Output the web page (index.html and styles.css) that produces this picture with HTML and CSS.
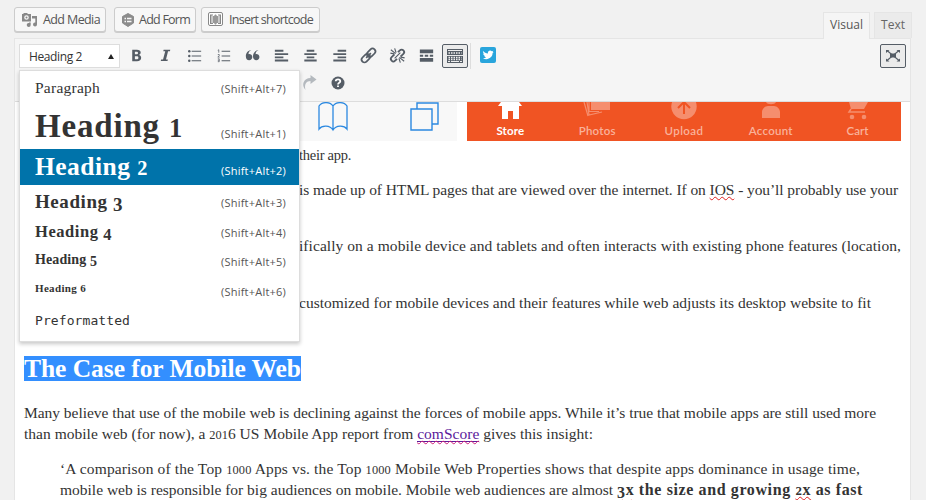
FILE: index.html
```
<!DOCTYPE html>
<html lang="en">
<head>
<meta charset="utf-8">
<title>Post editor</title>
<link rel="stylesheet" href="styles.css">
</head>
<body>
<div class="editor">
  <header class="top">
    <div class="media">
      <button class="btn b1"><svg width="16" height="16" viewBox="0 0 16 16"><path fill="#888" fill-rule="evenodd" d="M0 2h1.500V1h4v1H9v7.500H0zM4.500 3.200a2.300 2.300 0 1 0 0 4.600 2.300 2.300 0 0 0 0-4.600zM4.500 4.500a1 1 0 1 1 0 2 1 1 0 0 1 0-2z"/><path fill="#888" d="M10 4h5v8.500a2 2 0 1 1-1.700-2V6.500H10zM8.700 10.500V13a2 2 0 1 1-1.700-2v-.5z"/></svg><span class="fit" data-w="57">Add Media</span></button>
      <button class="btn b2"><svg width="14" height="16" viewBox="0 0 14 16"><path fill="#8c8c8c" stroke="#8c8c8c" stroke-linejoin="round" d="M7 1.500l5.500 3v6.500L7 14.500l-5.500-3.500V4.500z"/><path stroke="#f7f7f7" stroke-width="1.300" d="M3.500 6.500h1.500M6 6.500h4.500M3.500 9.500h1.500M6 9.500h4.500"/></svg><span class="fit" data-w="51">Add Form</span></button>
      <button class="btn b3"><svg width="15" height="15" viewBox="0 0 15 15"><rect x=".5" y=".5" width="14" height="13" rx="1.500" fill="#fff" stroke="#888"/><path fill="#888" d="M2 2.500h3v1H3.500v7.500H5v1H2zM10 2.500h3V12h-3v-1h1.500V3.500H10z"/><path fill="#999" d="M4.500 4h1.500l1-1.500h1L9 4h1.500v7H9l-1 1.500H7L6 11H4.500z"/></svg><span class="fit" data-w="84">Insert shortcode</span></button>
    </div>
    <div class="tabs"><div class="tab on">Visual</div><div class="tab">Text</div></div>
  </header>
  <section class="frame">
    <div class="toolbar">
      <div class="row">
        <div class="select"><span class="fit" data-w="53">Heading 2</span><i></i></div>
        <div class="icons">
          <span class="ic"><svg viewBox="0 0 20 20"><path fill-rule="evenodd" d="M5.500 4H10.500c2.300 0 3.900 1 3.900 2.900 0 1.300-.7 2.200-1.800 2.600 1.400.3 2.300 1.300 2.300 2.800 0 2.300-1.600 3.700-4.400 3.700h-5zM8.300 6v2.700h1.500c1.200 0 1.800-.5 1.800-1.400S11 6 9.800 6zM8.300 10.700V14h1.800c1.300 0 1.900-.6 1.900-1.700s-.7-1.600-2-1.600z"/></svg></span>
          <span class="ic"><svg viewBox="0 0 20 20"><path d="M8 4h7l-.3 1.600h-2L10.500 14.100h2l-.4 1.700H5l.4-1.700h2L9.700 5.600h-2z"/></svg></span>
          <span class="ic"><svg viewBox="0 0 20 20"><circle cx="4.500" cy="5.500" r="1.300"/><circle cx="4.500" cy="10.500" r="1.300"/><circle cx="4.500" cy="15.500" r="1.300"/><path d="M7 5h10v1H7zM7 10h10v1H7zM7 15h10v1H7z"/></svg></span>
          <span class="ic"><svg viewBox="0 0 20 20"><path fill="none" stroke="#555d66" stroke-width=".8" d="M4 4.500l1-.5v3M4 9h1.500v1.200L4 11.700h2M4 13.500h1.500v3H4M4 15h1.500"/><path d="M8 5h9v1H8zM8 10h9v1H8zM8 15h9v1H8z"/></svg></span>
          <span class="ic"><svg viewBox="0 0 20 20"><path d="M8.800 4.300C6.500 5.500 5.700 7 5.800 8.600c2-.4 4 .9 4 3 0 1.900-1.400 3.400-3.300 3.400-2.200 0-3.500-1.700-3.500-4.200 0-3.500 2.200-6 5.800-6.500zM16.300 4.300C14 5.500 13.200 7 13.300 8.600c2-.4 4 .9 4 3 0 1.900-1.400 3.400-3.300 3.400-2.200 0-3.500-1.700-3.500-4.200 0-3.500 2.200-6 5.800-6.500z"/></svg></span>
          <span class="ic"><svg viewBox="0 0 20 20"><path d="M3 4h9v2H3zM3 7.500h14v2H3zM3 11h9v2H3zM3 14.300h14v2H3z"/></svg></span>
          <span class="ic"><svg viewBox="0 0 20 20"><path d="M6 4h8v2H6zM3.500 7.500h13v2h-13zM6 11h8v2H6zM3.500 14.300h13v2h-13z"/></svg></span>
          <span class="ic"><svg viewBox="0 0 20 20"><path d="M8 4h9v2H8zM3.500 7.500H17v2H3.500zM8 11h9v2H8zM3.500 14.300H17v2H3.500z"/></svg></span>
          <span class="ic"><svg viewBox="0 0 20 20"><g fill="none" stroke="#555d66" stroke-width="1.800" transform="rotate(-45 10 10)"><rect x="1" y="7" width="10" height="6" rx="3"/><rect x="9" y="7" width="10" height="6" rx="3"/><path d="M6.500 10h7"/></g></svg></span>
          <span class="ic"><svg viewBox="0 0 20 20"><g fill="none" stroke="#555d66" stroke-width="1.900"><path d="M10.500 6.500l2-2a2.600 2.600 0 0 1 3.700 3.700l-3 3M9.500 13.500l-2 2a2.600 2.600 0 0 1-3.700-3.700l3-3"/><path stroke-width="1.200" d="M3 4l5 4M7 2.500L8.500 7M2.500 7.500l4 .8M17 16l-5-4M13 17.500L11.500 13M17.500 12.500l-4-.8M7 13l6-6"/></g></svg></span>
          <span class="ic"><svg viewBox="0 0 20 20"><path d="M3 3.700h14v4H3zM3 9.200h3.500v2H3zM8.200 9.200h3.600v2H8.200zM13.500 9.200H17v2h-3.500zM3 12.700h14v4H3z"/></svg></span>
          <span class="ic active"><svg viewBox="0 0 20 20"><path d="M2 3h16v6H2zM2 10h16v7H2z"/><path fill="none" stroke="#eee" d="M3 4.500h14M3 15.500h2M6 15.500h8M15 15.500h2"/><path fill="none" stroke="#eee" stroke-width="1.300" stroke-dasharray="1.500 1" d="M3.500 7h13M3.500 11.500h13M3.500 13.500h13"/></svg></span>
        </div>
        <div class="sep"></div>
        <svg class="tw" width="16" height="16" viewBox="0 0 16 16"><rect width="16" height="16" rx="2" fill="#29a5dc"/><path fill="#fff" d="M3 4c1.300 1.500 3 2.300 4.900 2.400C7.500 4 10.300 2.700 11.800 4.300l1.600-.6-.9 1.400 1.200-.2-1.100 1.200c.1 4.700-5.300 7.700-9.700 5.100 1.300.1 2.400-.3 3.200-.9-1-.1-1.600-.7-1.900-1.500h.9C3.900 8.300 3.200 7.500 3.200 6.400l1 .2C3 5.700 2.800 5 3 4z"/></svg>
        <span class="full"><svg width="18" height="18" viewBox="0 0 18 18"><path fill="#555d66" d="M6 6.500h6v4H6zM2 3h3.500L2 6zM16 3v3l-3.500-3zM2 14.500v-3l3.500 3zM16 14.500h-3.500l3.500-3z"/><path stroke="#555d66" stroke-width="1.100" d="M3 3.500l12 10M15 3.500l-12 10"/></svg></span>
      </div>
      <div class="row second">
        <svg width="18" height="18" viewBox="0 0 18 18"><path fill="#b4b9be" d="M10.500 1l6 4.500-6 4.500V7C6.500 7 4 10 5.500 16 1 11 3.500 4 10.500 4z"/></svg>
        <svg width="16" height="16" viewBox="0 0 16 16"><circle cx="8" cy="8" r="6.500" fill="#555d66"/><path fill="none" stroke="#fff" stroke-width="1.800" d="M5.700 6.300C5.700 3.600 10.300 3.600 10.300 6.300 10.300 7.800 8 7.700 8 9.400M8 10.400v1.700"/></svg>
      </div>
    </div>
    <main class="content">
      <div class="shots">
        <div class="safari">
          <svg width="30" height="30" viewBox="0 0 30 30" fill="none" stroke="#2b88e0" stroke-width="1.300"><path d="M15 4C12-.5 4-.5 1 4v23c3-4 11-4 14 1 3-5 11-5 14-1V4C26-.5 18-.5 15 4zv24"/></svg>
          <svg width="30" height="30" viewBox="0 0 30 30" fill="none" stroke="#2b88e0" stroke-width="1.400"><path d="M1 7h21v21H1zM7 7V1h21v21h-6"/></svg>
        </div>
        <div class="appbar">
          <div class="app sel"><svg width="26" height="18" viewBox="0 0 26 18"><path fill="#fff" d="M4 0h18l3 4h-3v13h-6V9h-5v8H5V4H1z"/></svg><span class="fit" data-w="28">Store</span></div>
          <div class="app"><svg width="28" height="18" viewBox="0 0 28 18"><path fill="#f58e6e" d="M8 0h19v8H8z"/><path fill="none" stroke="#f58e6e" stroke-width="1.200" d="M6 0v9.500h10M4 0l2 13 13-3M1 0l4 14"/></svg><span class="fit" data-w="37">Photos</span></div>
          <div class="app"><svg width="26" height="18" viewBox="0 0 26 18"><circle cx="13" cy="4.500" r="12.700" fill="#f58e6e"/><path fill="none" stroke="#f05423" stroke-width="2" d="M13 12V1M7 6l6-6 6 6"/></svg><span class="fit" data-w="39">Upload</span></div>
          <div class="app"><svg width="18" height="18" viewBox="0 0 18 18"><path fill="#f58e6e" d="M4 0h10C13 3 5 3 4 0zM0 16v-6c0-3 3-6 6-6h6c3 0 6 3 6 6v6z"/></svg><span class="fit" data-w="44">Account</span></div>
          <div class="app"><svg width="22" height="18" viewBox="0 0 22 18"><path fill="#f58e6e" d="M2 0h19l-4 7H4z"/><path stroke="#f58e6e" stroke-width="1.500" fill="none" d="M4 7l-2 3h16"/><circle cx="5" cy="15" r="2.300" fill="#f58e6e"/><circle cx="17" cy="15" r="2.300" fill="#f58e6e"/></svg><span class="fit" data-w="22">Cart</span></div>
        </div>
      </div>
      <p class="part l1"><span class="fit" data-w="52">their app.</span></p>
      <p class="part l2"><span class="fit" data-w="599">is made up of HTML pages that are viewed over the internet. If on <u class="sp">IOS</u> - you’ll probably use your</span></p>
      <p class="part l3"><span class="fit" data-w="602">ifically on a mobile device and tablets and often interacts with existing phone features (location,</span></p>
      <p class="part l4"><span class="fit" data-w="572">customized for mobile devices and their features while web adjusts its desktop website to fit</span></p>
      <h2><span class="fit" data-w="277">The Case for Mobile Web</span></h2>
      <p><span class="fit" data-w="852">Many believe that use of the mobile web is declining against the forces of mobile apps. While it’s true that mobile apps are still used more</span><br>
      <span class="fit" data-w="569">than mobile web (for now), a <b class="os">201</b>6 US Mobile App report from <a class="sp">comScore</a> gives this insight:</span></p>
      <blockquote><span class="fit" data-w="800">‘A comparison of the Top <b class="os">1000</b> Apps vs. the Top <b class="os">1000</b> Mobile Web Properties shows that despite apps dominance in usage time,</span><br>
      <span class="fit" data-w="557">mobile web is responsible for big audiences on mobile. Mobile web audiences are almost </span><strong class="fit" data-w="246"><u class="sp"><b class="od">3</b>x</u> the size and growing <u class="sp"><b class="os">2</b>x</u> as fast</strong></blockquote>
    </main>
    <div class="menu">
      <div class="mi m0"><span class="fit" data-w="65">Paragraph</span><kbd class="fit" data-w="65">(Shift+Alt+7)</kbd></div>
      <div class="mi m1"><span class="fit" data-w="148">Heading <b class="os">1</b></span><kbd class="fit" data-w="65">(Shift+Alt+1)</kbd></div>
      <div class="mi m2"><span class="fit" data-w="113">Heading <b class="os">2</b></span><kbd class="fit" data-w="65">(Shift+Alt+2)</kbd></div>
      <div class="mi m3"><span class="fit" data-w="88">Heading <b class="od">3</b></span><kbd class="fit" data-w="65">(Shift+Alt+3)</kbd></div>
      <div class="mi m4"><span class="fit" data-w="77">Heading <b class="od">4</b></span><kbd class="fit" data-w="65">(Shift+Alt+4)</kbd></div>
      <div class="mi m5"><span class="fit" data-w="62">Heading <b class="od">5</b></span><kbd class="fit" data-w="65">(Shift+Alt+5)</kbd></div>
      <div class="mi m6"><span class="fit" data-w="51">Heading 6</span><kbd class="fit" data-w="65">(Shift+Alt+6)</kbd></div>
      <div class="mi m7"><span class="fit" data-w="95">Preformatted</span></div>
    </div>
  </section>
</div>
<script src="fit.js"></script>
</body>
</html>
```
FILE: styles.css
```
* { box-sizing: border-box; }
html, body { margin: 0; height: 500px; overflow: hidden; }
body { background: #f1f1f1; color: #333; font: 13px "Open Sans", sans-serif; }
svg { display: block; flex: none; }
.editor { padding: 0 14px; height: 500px; display: flex; flex-direction: column; }
.top { height: 38px; flex: none; display: flex; justify-content: space-between; }
.media { display: flex; padding-top: 7px; }
.btn { height: 25px; border: 1px solid #ccc; border-radius: 3px; background: #f7f7f7; box-shadow: 0 1px 0 #ccc; color: #555; font: 12.500px "Open Sans", sans-serif; padding: 0 0 0 7px; display: flex; align-items: center; gap: 5px; }
.b1 { width: 92px; margin-right: 8px; }
.b2 { width: 82px; margin-right: 5px; gap: 4px; padding-left: 6px; }
.b3 { width: 119px; gap: 6px; padding-left: 6px; }
.fit { display: inline-block; white-space: pre; }
.tabs { display: flex; align-items: flex-end; gap: 4px; }
.tab { height: 26px; width: 38px; border: 1px solid #e5e5e5; border-bottom: 0; background: #ebebeb; color: #666; font-size: 12px; line-height: 23px; text-align: center; }
.tab.on { width: 47px; height: 27px; margin-bottom: -1px; background: #f5f5f5; color: #555; position: relative; z-index: 2; }
.frame { position: relative; flex: 1; width: 897px; background: #fff; border: 1px solid #e5e5e5; border-bottom: 0; min-height: 0; }
.toolbar { height: 63px; background: #f5f5f5; border-bottom: 1px solid #ddd; padding: 5px 4px 0; }
.row { display: flex; align-items: flex-start; height: 24px; }
.select { width: 101px; height: 24px; border: 1px solid #ddd; background: #fff; display: flex; align-items: center; justify-content: space-between; padding: 0 5px 0 9px; font-size: 12px; }
.select i { border: 3.500px solid transparent; border-top: 0; border-bottom: 5px solid #222; }
.icons { display: flex; gap: 3px; margin-left: 3px; }
.ic { width: 26px; height: 24px; display: flex; align-items: center; justify-content: center; }
.ic svg { width: 19px; height: 19px; fill: #555d66; margin-bottom: 1px; }
.active { border: 1px solid #555d66; border-radius: 2px; background: #ebebeb; }
.active svg { width: 20px; height: 20px; margin: 0; }
.sep { width: 1px; height: 26px; background: #ddd; margin: -1px 9px 0 2px; }
.tw { margin-top: 3px; }
.full { margin-left: auto; width: 26px; height: 24px; border: 1px solid #555d66; border-radius: 2px; background: #ebebeb; display: flex; align-items: center; justify-content: center; }
.second { padding-left: 281px; margin-top: 3px; gap: 12px; align-items: center; }
.content { padding: 0 9px; font: 15.500px/21px "Liberation Serif", serif; }
.shots { display: flex; height: 39px; justify-content: space-between; }
.safari { width: 433px; background: #f8f8f8; display: flex; justify-content: flex-end; gap: 62px; padding-right: 17px; }
.appbar { width: 434px; background: #f05423; display: flex; justify-content: space-between; }
.app { width: 87px; display: flex; flex-direction: column; align-items: center; color: #f9b29b; font: 600 11.500px/15px Lato, sans-serif; }
.app svg { margin-bottom: 3px; }
.sel { color: #fff; font-weight: 700; }
p, h2, blockquote { margin: 0; }
.part { padding-left: 275px; height: 21px; }
.l1 { margin-top: 4px; font-size: 14.500px; }
.l2 { margin-top: 13px; }
.l3 { margin-top: 35px; }
.l4 { margin-top: 36px; }
h2 { margin: 43px 0 21px; height: 25px; font: bold 25.500px/25px "Liberation Serif", serif; color: #fff; }
h2 .fit { background: #338fff; }
blockquote { margin: 14px 0 0 36px; }
blockquote .fit { height: 21px; vertical-align: top; }
strong { font-size: 16px; }
.sp { text-decoration: underline wavy #e02020 1px; text-underline-offset: 1px; text-decoration-skip-ink: none; }
a.sp { color: #5b1a9b; border-bottom: 1px solid #5b1a9b; text-decoration-color: #d0207a; line-height: 14px; display: inline-block; }
.os { font-size: .8em; font-weight: inherit; line-height: 0; }
.od { font-weight: inherit; position: relative; top: .16em; line-height: 0; }
.menu { position: absolute; left: 4px; top: 31px; width: 281px; height: 272px; background: #fff; border: 1px solid #ddd; box-shadow: 0 2px 4px rgba(0,0,0,.22); padding-top: 2px; font-family: "Liberation Serif", serif; font-weight: bold; color: #333; }
.mi { display: flex; justify-content: space-between; padding: 0 13px 0 15px; align-items: center; }
.mi kbd { font: 11px/16px "Open Sans", sans-serif; color: #555; }
.m0 { height: 31px; font-size: 15.500px; font-weight: normal; }
.m0 > span { margin-top: -2px; }
.m1 { height: 45px; font-size: 33px; }
.m1 kbd { margin-top: 15px; }
.m2 { height: 36px; font-size: 25.500px; background: #0073aa; color: #fff; }
.m2 kbd { color: #fff; margin-top: 8px; }
.m3 { height: 33px; font-size: 19px; }
.m3 kbd { margin-top: 3px; }
.m4 { height: 28px; font-size: 16.500px; }
.m4 kbd { margin-top: 2px; }
.m5 { height: 27px; font-size: 14px; }
.m5 kbd { margin-top: 5px; }
.m6 { height: 31px; font-size: 11px; }
.m6 > span { margin-top: -2px; }
.m6 kbd { margin-top: 7px; }
.m7 { height: 33px; font: 13px "DejaVu Sans Mono", monospace; }
```
FILE: fit.js
```
// Spreads each text run over its set measure by adjusting the tracking.
document.querySelectorAll('.fit').forEach(function (el) {
  var gap = el.dataset.w - el.getBoundingClientRect().width;
  el.style.letterSpacing = (gap / el.textContent.length) + 'px';
});
```
